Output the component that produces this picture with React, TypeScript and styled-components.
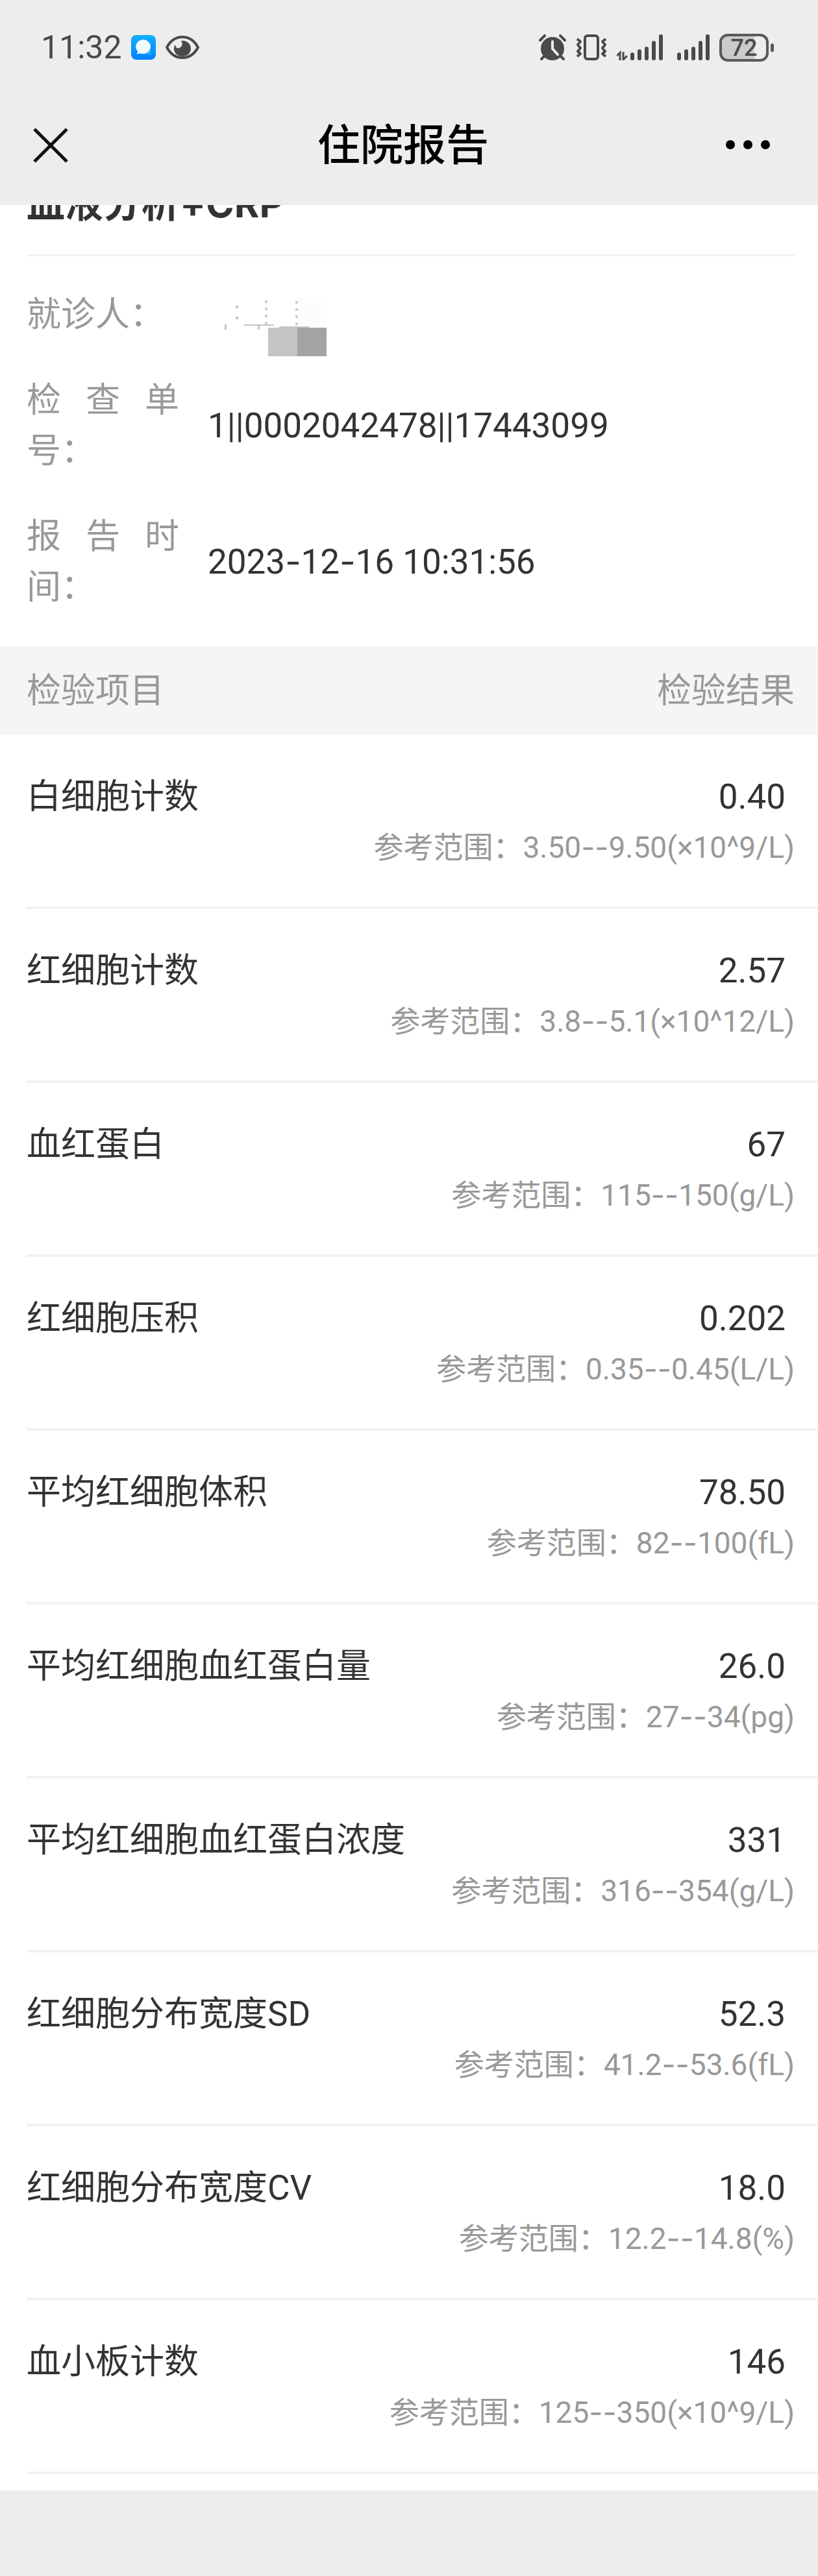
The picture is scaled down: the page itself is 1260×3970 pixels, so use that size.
import React from 'react';
import styled, { createGlobalStyle } from 'styled-components';

const GlobalStyle = createGlobalStyle`
  body {
    margin: 0;
    background: #ececec;
    color: #333;
    font-family: Roboto, "Noto Sans CJK SC", sans-serif;
    font-size: 53px;
    line-height: 78px;
  }
`;

const TopArea = styled.header`
  position: relative;
  z-index: 1;
  background: #ededed;
`;

const StatusBar = styled.div`
  display: flex;
  align-items: center;
  justify-content: space-between;
  height: 146px;
  padding: 0 68px 0 63px;
  color: #4a4a4a;
`;

const StatusGroup = styled.div<{ $gap: number }>`
  display: flex;
  align-items: center;
  gap: ${(p) => p.$gap}px;

  svg {
    display: block;
  }
`;

const Clock = styled.time`
  font-size: 50px;
`;

const Battery = styled.div`
  display: flex;
  align-items: center;
  gap: 3px;
`;

const BatteryBody = styled.div`
  box-sizing: border-box;
  width: 76px;
  height: 43px;
  border: 4px solid #5a5a5a;
  border-radius: 13px;
  background: linear-gradient(to right, #cbcbcb 74%, #ededed 74%);
  color: #4a4a4a;
  font-size: 36px;
  font-weight: 500;
  line-height: 36px;
  text-align: center;
`;

const BatteryNub = styled.div`
  width: 5px;
  height: 13px;
  border-radius: 3px;
  background: #5a5a5a;
`;

const NavBar = styled.nav`
  display: flex;
  align-items: center;
  justify-content: space-between;
  height: 154px;
  padding: 0 68px 16px 50px;
`;

const PageTitle = styled.h1`
  margin: 0;
  padding-top: 4px;
  color: #000;
  font-size: 66px;
  font-weight: 500;
  line-height: 90px;
`;

const IconButton = styled.button`
  display: flex;
  align-items: center;
  width: 74px;
  padding: 0;
  border: 0;
  background: none;
  color: #111;
`;

const Report = styled.main`
  padding-bottom: 25px;
  background: #fff;
`;

const ReportHead = styled.div`
  margin: 0 36px 0 41px;
  padding-bottom: 33px;
  border-bottom: 3px solid #f2f2f2;
`;

/* The page is scrolled, so the heading is partly under the top area. */
const ReportName = styled.h2`
  margin: -47px 0 0;
  font-family: Inter, "Noto Sans CJK SC", sans-serif;
  font-size: 59px;
  font-weight: 700;
  line-height: 90px;
`;

const Details = styled.dl`
  display: flex;
  flex-direction: column;
  gap: 54px;
  margin: 0;
  padding: 51px 36px 52px 41px;
`;

const Detail = styled.div`
  display: flex;
  align-items: center;
  gap: 44px;
`;

const DetailLabel = styled.dt`
  flex: none;
  width: 235px;
  color: #999;
  text-align: justify;
`;

const DetailValue = styled.dd`
  position: relative;
  flex: 1;
  min-height: 78px;
  margin: 0;
`;

/* Roboto's hyphen is short between figures; Inter's is wide enough. */
const Dash = styled.span`
  font-family: Inter, sans-serif;
  line-height: 1;
`;

const Mosaic = styled.svg`
  position: absolute;
  top: 10px;
  left: 0;
`;

const Results = styled.table`
  display: block;
`;

const HeadRow = styled.tr`
  display: flex;
  justify-content: space-between;
  padding: 30px 36px 29px 41px;
  background: #f5f5f5;
  color: #999;
`;

const HeadCell = styled.th`
  padding: 0;
  font-weight: 400;
`;

const ResultsPart = styled.thead`
  display: block;
`;

const ResultRow = styled.tr`
  display: flex;
  justify-content: space-between;
  margin-left: 41px;
  padding: 56px 36px 52px 0;
  border-bottom: 4px solid #f2f2f2;
`;

const ItemName = styled.th`
  padding: 0;
  font-weight: 400;
  text-align: left;
`;

const ItemResult = styled.td`
  padding: 0;
  text-align: right;
`;

const Value = styled.div`
  padding-right: 14px;
`;

const Range = styled.div`
  color: #999;
  font-size: 46px;
`;

const ROWS = [
  { name: '白细胞计数', value: '0.40', range: '3.50--9.50(×10^9/L)' },
  { name: '红细胞计数', value: '2.57', range: '3.8--5.1(×10^12/L)' },
  { name: '血红蛋白', value: '67', range: '115--150(g/L)' },
  { name: '红细胞压积', value: '0.202', range: '0.35--0.45(L/L)' },
  { name: '平均红细胞体积', value: '78.50', range: '82--100(fL)' },
  { name: '平均红细胞血红蛋白量', value: '26.0', range: '27--34(pg)' },
  { name: '平均红细胞血红蛋白浓度', value: '331', range: '316--354(g/L)' },
  { name: '红细胞分布宽度SD', value: '52.3', range: '41.2--53.6(fL)' },
  { name: '红细胞分布宽度CV', value: '18.0', range: '12.2--14.8(%)' },
  { name: '血小板计数', value: '146', range: '125--350(×10^9/L)' },
];

const Figures = ({ text }: { text: string }) => (
  <>
    {text.split(/(-+)/).map((part, i) => (part.startsWith('-') ? <Dash key={i}>{part}</Dash> : part))}
  </>
);

const MessageIcon = () => (
  <svg width="38" height="38" viewBox="0 0 38 38" aria-hidden="true">
    <defs>
      <linearGradient id="msg" x1="0" y1="0" x2="0" y2="1">
        <stop offset="0" stopColor="#0fb0ff" />
        <stop offset="1" stopColor="#0080ff" />
      </linearGradient>
    </defs>
    <rect width="38" height="38" rx="8" fill="url(#msg)" />
    <path d="M22 29l9 2-1-9z" fill="#12b5f5" />
    <path d="M18 7a12 11 0 0 1 0 22c-2 0-3-.3-5-.8L9 30l1-5A12 11 0 0 1 18 7z" fill="#effaff" />
  </svg>
);

const EyeIcon = () => (
  <svg width="54" height="38" viewBox="0 0 54 38" aria-hidden="true">
    <path d="M3 19C9 8 17 3 27 3s18 5 24 16c-6 11-14 16-24 16S9 30 3 19z" fill="none" stroke="currentColor" strokeWidth="4" strokeLinejoin="round" />
    <path d="M25 9c8-1 15 4 15 12 0 7-6 12-13 12s-13-5-13-12c0-2 .5-4 2-6 1 5 3 6 6 5 5-2 6-7 3-11z" fill="currentColor" />
  </svg>
);

const AlarmIcon = () => (
  <svg width="42" height="40" viewBox="0 0 42 40" aria-hidden="true">
    <circle cx="21" cy="22" r="18" fill="currentColor" />
    <path d="M2 9l7-7M40 9l-7-7M8 34l-4 4M34 34l4 4" stroke="currentColor" strokeWidth="4" strokeLinecap="round" />
    <path d="M21 11v11l8 9" fill="none" stroke="#ededed" strokeWidth="4" strokeLinecap="round" strokeLinejoin="round" />
  </svg>
);

const VibrateIcon = () => (
  <svg width="48" height="40" viewBox="0 0 48 40" fill="none" stroke="currentColor" aria-hidden="true">
    <rect x="14" y="2" width="20" height="36" rx="4" strokeWidth="4" />
    <path d="M2 7l5 4-4 5 4 5-4 5 4 4-5 4M46 7l-5 4 4 5-4 5 4 5-4 4 5 4" strokeWidth="4" strokeLinejoin="round" />
  </svg>
);

const BARS = [12, 17, 21, 30, 40];

const SignalIcon = ({ data = false }: { data?: boolean }) => {
  const left = data ? 21 : 0;
  return (
    <svg width={left + 50} height="40" viewBox={`0 0 ${left + 50} 40`} aria-hidden="true">
      {data && <path d="M0 33l5-5v12M10 27v12l6-6" fill="none" stroke="currentColor" strokeWidth="3" />}
      {BARS.map((h, i) => (
        <rect key={h} x={left + i * 11} y={40 - h} width="6" height={h} rx="3" fill="currentColor" />
      ))}
    </svg>
  );
};

const CloseIcon = () => (
  <svg width="56" height="56" viewBox="0 0 56 56" aria-hidden="true">
    <path d="M3 4l50 50M53 4L3 54" stroke="currentColor" strokeWidth="5" />
  </svg>
);

const MoreIcon = () => (
  <svg width="74" height="20" viewBox="0 0 74 20" aria-hidden="true">
    <circle cx="7" cy="10" r="7" />
    <circle cx="34" cy="10" r="7" />
    <circle cx="61" cy="10" r="7" />
  </svg>
);

const HiddenName = () => (
  <Mosaic width="184" height="94" viewBox="0 0 184 94" role="img" aria-label="已打码">
    <rect x="139" y="2" width="44" height="46" fill="#fcfcfc" />
    <g fill="#c4c4c4">
      <rect x="43" y="15" width="4" height="4" />
      <rect x="43" y="32" width="4" height="4" />
      <rect x="26" y="44" width="3" height="8" />
      <rect x="56" y="44" width="46" height="2" />
      <rect x="77" y="46" width="3" height="6" />
      <rect x="110" y="47" width="46" height="2" />
    </g>
    <path d="M90 7v38M137 8v38" stroke="#cfcfcf" strokeWidth="4" strokeDasharray="4 7" />
    <rect x="93" y="49" width="45" height="44" fill="#c4c4c4" />
    <rect x="138" y="49" width="45" height="44" fill="#a3a3a3" />
  </Mosaic>
);

export default function App() {
  return (
    <>
      <GlobalStyle />
      <TopArea>
        <StatusBar>
          <StatusGroup $gap={14}>
            <Clock>11:32</Clock>
            <MessageIcon />
            <EyeIcon />
          </StatusGroup>
          <StatusGroup $gap={15}>
            <AlarmIcon />
            <VibrateIcon />
            <StatusGroup $gap={22}>
              <SignalIcon data />
              <SignalIcon />
            </StatusGroup>
            <Battery>
              <BatteryBody>72</BatteryBody>
              <BatteryNub />
            </Battery>
          </StatusGroup>
        </StatusBar>
        <NavBar>
          <IconButton type="button" aria-label="关闭">
            <CloseIcon />
          </IconButton>
          <PageTitle>住院报告</PageTitle>
          <IconButton type="button" aria-label="更多">
            <MoreIcon />
          </IconButton>
        </NavBar>
      </TopArea>
      <Report>
        <ReportHead>
          <ReportName>血液分析+CRP</ReportName>
        </ReportHead>
        <Details>
          <Detail>
            <DetailLabel>就诊人：</DetailLabel>
            <DetailValue>
              <HiddenName />
            </DetailValue>
          </Detail>
          <Detail>
            <DetailLabel>检查单号：</DetailLabel>
            <DetailValue>1||0002042478||17443099</DetailValue>
          </Detail>
          <Detail>
            <DetailLabel>报告时间：</DetailLabel>
            <DetailValue>
              <Figures text="2023-12-16 10:31:56" />
            </DetailValue>
          </Detail>
        </Details>
        <Results>
          <ResultsPart>
            <HeadRow>
              <HeadCell scope="col">检验项目</HeadCell>
              <HeadCell scope="col">检验结果</HeadCell>
            </HeadRow>
          </ResultsPart>
          <ResultsPart as="tbody">
            {ROWS.map((row) => (
              <ResultRow key={row.name}>
                <ItemName scope="row">{row.name}</ItemName>
                <ItemResult>
                  <Value>{row.value}</Value>
                  <Range>
                    参考范围：
                    <Figures text={row.range} />
                  </Range>
                </ItemResult>
              </ResultRow>
            ))}
          </ResultsPart>
        </Results>
      </Report>
    </>
  );
}
